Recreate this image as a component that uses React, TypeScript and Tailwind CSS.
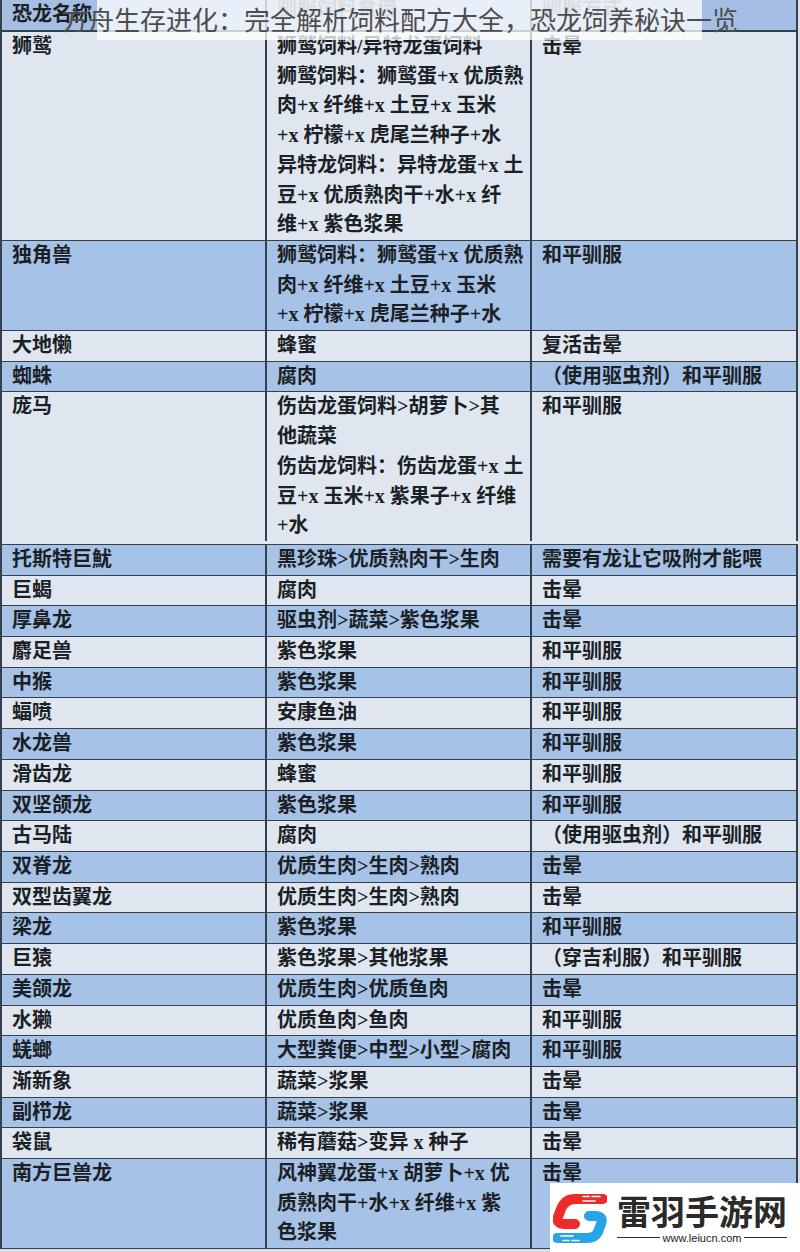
type Row = {
  name: string;
  food: string[];
  method: string;
  tall?: boolean;
};

const rows: Row[] = [
  {
    name: "狮鹫",
    food: [
      "狮鹫饲料/异特龙蛋饲料",
      "狮鹫饲料：狮鹫蛋+x 优质熟",
      "肉+x 纤维+x 土豆+x 玉米",
      "+x 柠檬+x 虎尾兰种子+水",
      "异特龙饲料：异特龙蛋+x 土",
      "豆+x 优质熟肉干+水+x 纤",
      "维+x 紫色浆果",
    ],
    method: "击晕",
  },
  {
    name: "独角兽",
    food: ["狮鹫饲料：狮鹫蛋+x 优质熟", "肉+x 纤维+x 土豆+x 玉米", "+x 柠檬+x 虎尾兰种子+水"],
    method: "和平驯服",
  },
  { name: "大地懒", food: ["蜂蜜"], method: "复活击晕" },
  { name: "蜘蛛", food: ["腐肉"], method: "（使用驱虫剂）和平驯服" },
  {
    name: "庞马",
    food: ["伤齿龙蛋饲料>胡萝卜>其", "他蔬菜", "伤齿龙饲料：伤齿龙蛋+x 土", "豆+x 玉米+x 紫果子+x 纤维", "+水"],
    method: "和平驯服",
    tall: true,
  },
  { name: "托斯特巨魷", food: ["黑珍珠>优质熟肉干>生肉"], method: "需要有龙让它吸附才能喂" },
  { name: "巨蝎", food: ["腐肉"], method: "击晕" },
  { name: "厚鼻龙", food: ["驱虫剂>蔬菜>紫色浆果"], method: "击晕" },
  { name: "麝足兽", food: ["紫色浆果"], method: "和平驯服" },
  { name: "中猴", food: ["紫色浆果"], method: "和平驯服" },
  { name: "蝠喷", food: ["安康鱼油"], method: "和平驯服" },
  { name: "水龙兽", food: ["紫色浆果"], method: "和平驯服" },
  { name: "滑齿龙", food: ["蜂蜜"], method: "和平驯服" },
  { name: "双坚颌龙", food: ["紫色浆果"], method: "和平驯服" },
  { name: "古马陆", food: ["腐肉"], method: "（使用驱虫剂）和平驯服" },
  { name: "双脊龙", food: ["优质生肉>生肉>熟肉"], method: "击晕" },
  { name: "双型齿翼龙", food: ["优质生肉>生肉>熟肉"], method: "击晕" },
  { name: "梁龙", food: ["紫色浆果"], method: "和平驯服" },
  { name: "巨猿", food: ["紫色浆果>其他浆果"], method: "（穿吉利服）和平驯服" },
  { name: "美颌龙", food: ["优质生肉>优质鱼肉"], method: "击晕" },
  { name: "水獭", food: ["优质鱼肉>鱼肉"], method: "和平驯服" },
  { name: "蜣螂", food: ["大型粪便>中型>小型>腐肉"], method: "和平驯服" },
  { name: "渐新象", food: ["蔬菜>浆果"], method: "击晕" },
  { name: "副栉龙", food: ["蔬菜>浆果"], method: "击晕" },
  { name: "袋鼠", food: ["稀有蘑菇>变异 x 种子"], method: "击晕" },
  {
    name: "南方巨兽龙",
    food: ["风神翼龙蛋+x 胡萝卜+x 优", "质熟肉干+水+x 纤维+x 紫", "色浆果"],
    method: "击晕",
  },
];

function LeiyuLogo() {
  return (
    <svg width="54" height="56" viewBox="0 0 54 56">
      <path d="M50 9 H22 Q12 9 8 19 L5 27 Q3 34 12 34 H22" fill="none" stroke="#ee2b2b" strokeWidth="10" strokeLinecap="round" strokeLinejoin="round" />
      <path d="M30 6.5 H36 M39 6.5 H47" stroke="#ffffff" strokeWidth="1.6" strokeLinecap="round" />
      <path d="M30 11 H42" stroke="#ffffff" strokeWidth="1.6" strokeLinecap="round" />
      <path d="M36 26 H42 Q51 26 48 34 L45 42 Q42 48 34 48 H4" fill="none" stroke="#27a3e6" strokeWidth="10" strokeLinecap="round" strokeLinejoin="round" />
      <path d="M8 46 H20 M10 50.5 H16 M19 50.5 H26" stroke="#ffffff" strokeWidth="1.6" strokeLinecap="round" />
    </svg>
  );
}

export default function App() {
  const cell = "border-r-2 border-[#34404e] pl-[10px] pr-1 whitespace-nowrap";

  return (
    <div className="relative w-[800px] h-[1252px] overflow-hidden bg-[#d9dfe6] text-[20px] font-bold leading-[29.7px] text-[#1b1f26] font-['Liberation_Serif','Noto_Sans_CJK_SC',serif]">
      <div className="w-[798px] border-l-2 border-[#34404e]">
        <div className="grid grid-cols-[265px_265px_266px] h-[32px] border-b-2 border-[#34404e] bg-[#a4bfe3] overflow-hidden">
          <div className={cell + " leading-[28px]"}>恐龙名称</div>
          <div className={cell + " leading-[16px] text-[#6b7a90]"}>驯服饲料食谱</div>
          <div className={cell + " leading-[16px] text-[#6b7a90]"}>驯服方式</div>
        </div>

        {rows.map((row, i) => (
          <div
            key={row.name}
            className={
              "grid grid-cols-[265px_265px_266px] border-b-[1.5px] border-[#34404e] " +
              (i % 2 === 0 ? "bg-[#dfe6ef]" : "bg-[#a6c2e6]") +
              (row.tall ? " pb-[3px]" : "")
            }
          >
            <div className={cell}>{row.name}</div>
            <div className={cell}>
              {row.food.map((line) => (
                <div key={line}>{line}</div>
              ))}
            </div>
            <div className={cell}>{row.method}</div>
          </div>
        ))}
      </div>

      {/* title overlay */}
      <div className="absolute left-[97px] top-0 w-[605px] h-[40px] bg-white/75" />
      <div className="absolute left-[62px] top-[3px] whitespace-nowrap text-[26px] leading-[32px] font-normal text-[#4d4d4d] font-['Noto_Sans_CJK_SC',sans-serif]">
        方舟生存进化：完全解析饲料配方大全，恐龙饲养秘诀一览
      </div>

      {/* watermark */}
      <div className="absolute right-0 bottom-0 w-[250px] h-[69px] bg-white flex items-center pl-[3px]">
        <LeiyuLogo />
        <div className="ml-[10px] flex flex-col items-center">
          <div className="text-[34px] leading-[40px] font-bold text-[#2a2a2a] font-['Noto_Sans_CJK_SC',sans-serif]">
            雷羽手游网
          </div>
          <div className="flex items-center gap-[3px] w-[170px]">
            <div className="flex-1 h-[1.5px] bg-[#333]" />
            <div className="text-[11px] leading-[14px] font-normal text-[#222] font-['Liberation_Sans',sans-serif]">
              www.leiucn.com
            </div>
            <div className="flex-1 h-[1.5px] bg-[#333]" />
          </div>
        </div>
      </div>
    </div>
  );
}
